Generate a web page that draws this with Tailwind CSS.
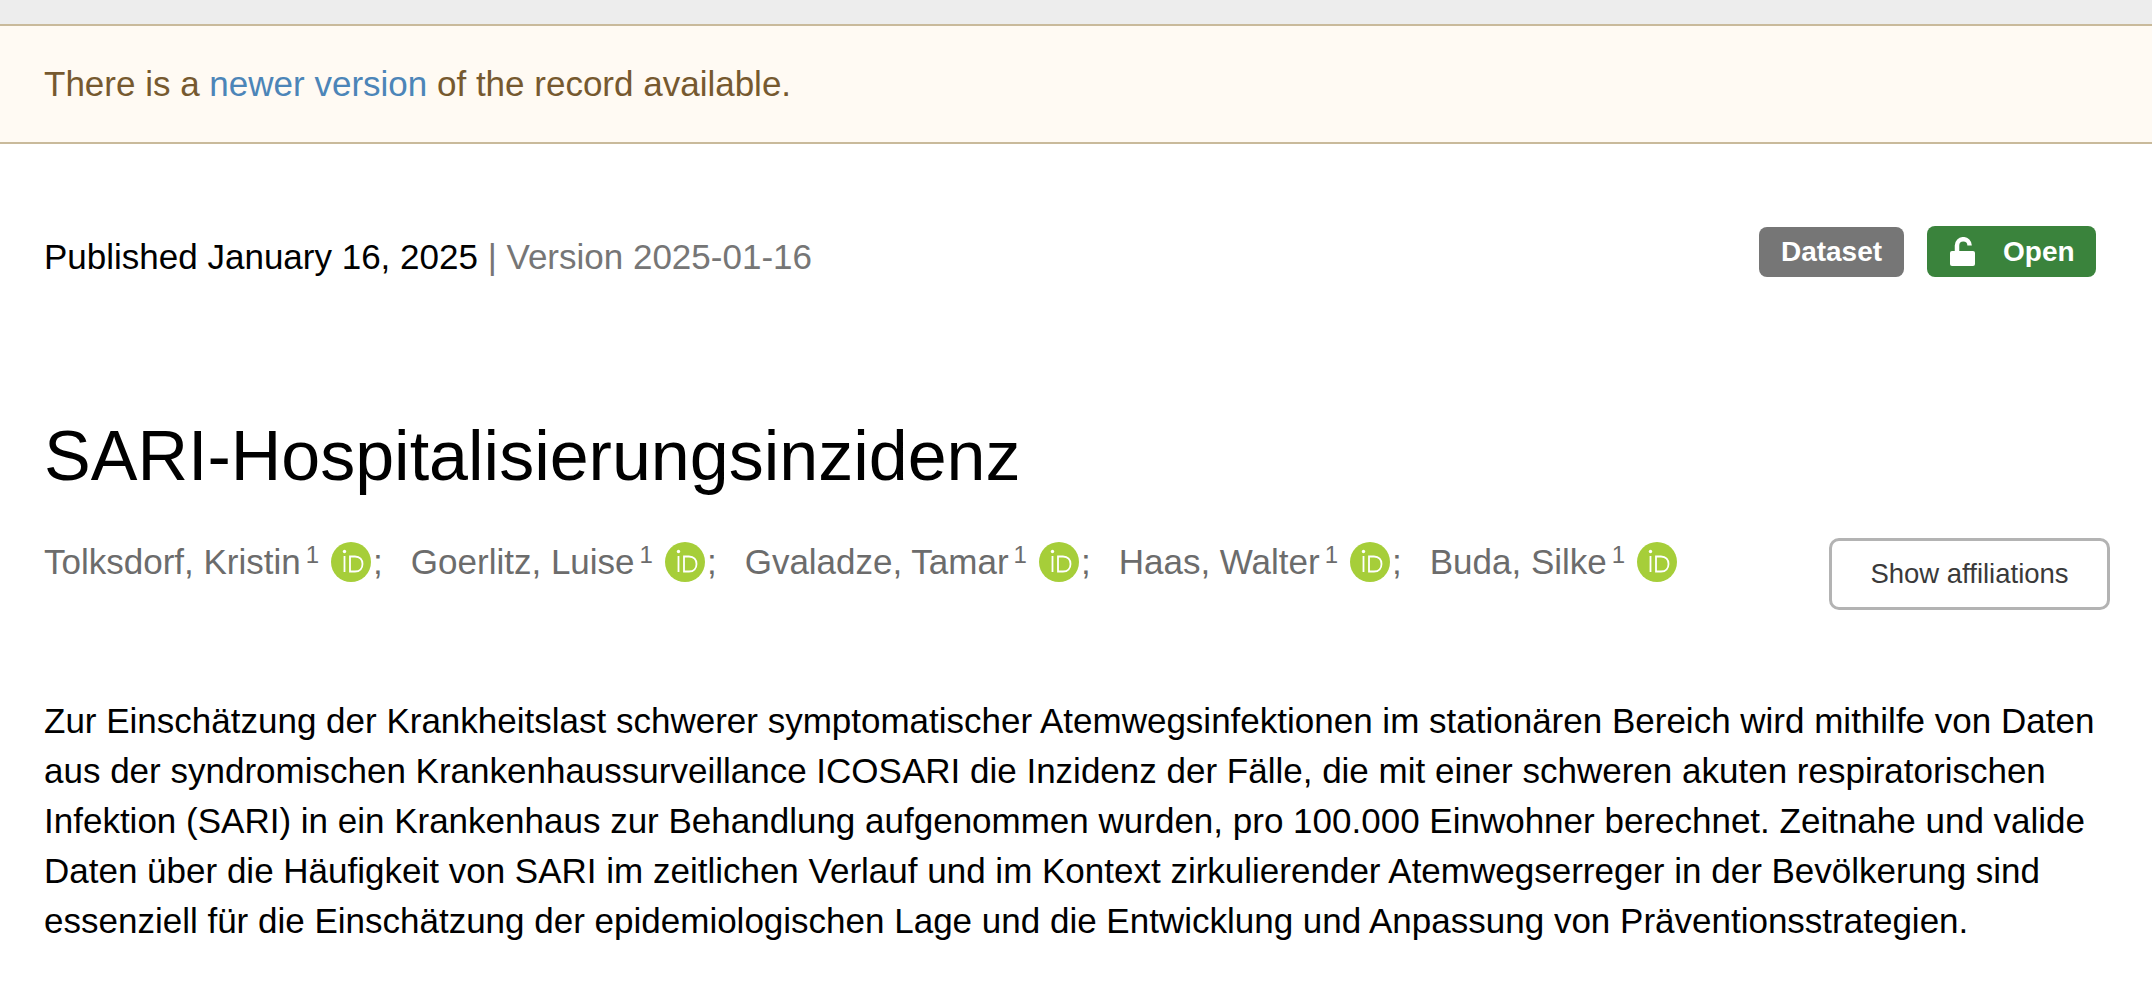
<!DOCTYPE html>
<html><head><meta charset="utf-8"><script src="https://cdn.jsdelivr.net/npm/@tailwindcss/browser@4"></script></head>
<body class="bg-white overflow-hidden font-['Liberation_Sans',sans-serif]">
<div class="w-[2152px] h-[996px] overflow-hidden flex flex-col">
<div class="h-[24px] bg-[#ededed]"></div>
<div class="h-[120px] bg-[#fffaf3] border-y-2 border-[#c9ba9b] px-[44px] flex items-center text-[35px] text-[#76592f]">
<p>There is a <a class="text-[#4c85b8]">newer version</a> of the record available.</p>
</div>
<div class="flex justify-between items-start pl-[44px] pr-[56px] mt-[82px]">
<p class="text-[35px] leading-[50px] mt-[6px]">Published January 16, 2025 <span class="text-[#767676]">| Version 2025-01-16</span></p>
<div class="flex items-end gap-[23px] h-[51px]">
<span class="h-[50px] w-[145px] rounded-[8px] bg-[#767676] text-white font-bold text-[28px] flex items-center justify-center">Dataset</span>
<span class="h-[51px] w-[169px] rounded-[8px] bg-[#3a833c] text-white font-bold text-[28px] flex items-center pl-[23px] gap-[27px]">
<svg width="26" height="30" viewBox="0 0 26 30"><rect x="0" y="14" width="25" height="15" rx="2" fill="#fff"/><path fill="none" stroke="#fff" stroke-width="4.500" d="M7 16V8.500a6.300 6.300 0 0 1 12.600 0"/></svg>
Open</span>
</div>
</div>
<h1 class="text-[70px] leading-[80px] ml-[44px] mt-[134px]">SARI-Hospitalisierungsinzidenz</h1>
<div class="flex justify-between items-start pl-[44px] pr-[42px] mt-[39px] text-[#6c6c6c]">
<div class="flex items-center text-[35px] h-[54px]">
<span class="mt-[1px]">Tolksdorf, Kristin</span><sup class="text-[24px] ml-[5px] mt-[9px]">1</sup>
<svg class="ml-[12px]" width="40" height="40" viewBox="0 0 40 40"><circle cx="20" cy="20" r="20" fill="#a6ce39"/><path fill="none" stroke="#fff" stroke-width="1.800" d="M13.500 14v16M19 14.500v15h5c5 0 7.500-3.400 7.500-7.500s-2.500-7.500-7.500-7.500z"/><circle cx="13.500" cy="9.500" r="1.700" fill="#fff"/></svg><span class="ml-[2px] mt-[1px]">;</span>
<span class="ml-[28px] mt-[1px]">Goerlitz, Luise</span><sup class="text-[24px] ml-[5px] mt-[9px]">1</sup>
<svg class="ml-[12px]" width="40" height="40" viewBox="0 0 40 40"><circle cx="20" cy="20" r="20" fill="#a6ce39"/><path fill="none" stroke="#fff" stroke-width="1.800" d="M13.500 14v16M19 14.500v15h5c5 0 7.500-3.400 7.500-7.500s-2.500-7.500-7.500-7.500z"/><circle cx="13.500" cy="9.500" r="1.700" fill="#fff"/></svg><span class="ml-[2px] mt-[1px]">;</span>
<span class="ml-[28px] mt-[1px]">Gvaladze, Tamar</span><sup class="text-[24px] ml-[5px] mt-[9px]">1</sup>
<svg class="ml-[12px]" width="40" height="40" viewBox="0 0 40 40"><circle cx="20" cy="20" r="20" fill="#a6ce39"/><path fill="none" stroke="#fff" stroke-width="1.800" d="M13.500 14v16M19 14.500v15h5c5 0 7.500-3.400 7.500-7.500s-2.500-7.500-7.500-7.500z"/><circle cx="13.500" cy="9.500" r="1.700" fill="#fff"/></svg><span class="ml-[2px] mt-[1px]">;</span>
<span class="ml-[28px] mt-[1px]">Haas, Walter</span><sup class="text-[24px] ml-[5px] mt-[9px]">1</sup>
<svg class="ml-[12px]" width="40" height="40" viewBox="0 0 40 40"><circle cx="20" cy="20" r="20" fill="#a6ce39"/><path fill="none" stroke="#fff" stroke-width="1.800" d="M13.500 14v16M19 14.500v15h5c5 0 7.500-3.400 7.500-7.500s-2.500-7.500-7.500-7.500z"/><circle cx="13.500" cy="9.500" r="1.700" fill="#fff"/></svg><span class="ml-[2px] mt-[1px]">;</span>
<span class="ml-[28px] mt-[1px]">Buda, Silke</span><sup class="text-[24px] ml-[5px] mt-[9px]">1</sup>
<svg class="ml-[12px]" width="40" height="40" viewBox="0 0 40 40"><circle cx="20" cy="20" r="20" fill="#a6ce39"/><path fill="none" stroke="#fff" stroke-width="1.800" d="M13.500 14v16M19 14.500v15h5c5 0 7.500-3.400 7.500-7.500s-2.500-7.500-7.500-7.500z"/><circle cx="13.500" cy="9.500" r="1.700" fill="#fff"/></svg>
</div>
<button class="w-[281px] h-[72px] mt-[3px] border-[3px] border-[#b3b3b3] rounded-[10px] text-[27.5px] text-[#3a3a3a] bg-white">Show affiliations</button>
</div>
<p class="mx-[44px] mt-[86px] text-[35px] leading-[50px] text-black whitespace-nowrap">Zur Einschätzung der Krankheitslast schwerer symptomatischer Atemwegsinfektionen im stationären Bereich wird mithilfe von Daten<br>aus der syndromischen Krankenhaussurveillance ICOSARI die Inzidenz der Fälle, die mit einer schweren akuten respiratorischen<br>Infektion (SARI) in ein Krankenhaus zur Behandlung aufgenommen wurden, pro 100.000 Einwohner berechnet. Zeitnahe und valide<br>Daten über die Häufigkeit von SARI im zeitlichen Verlauf und im Kontext zirkulierender Atemwegserreger in der Bevölkerung sind<br>essenziell für die Einschätzung der epidemiologischen Lage und die Entwicklung und Anpassung von Präventionsstrategien.</p>
</div>
</body></html>
